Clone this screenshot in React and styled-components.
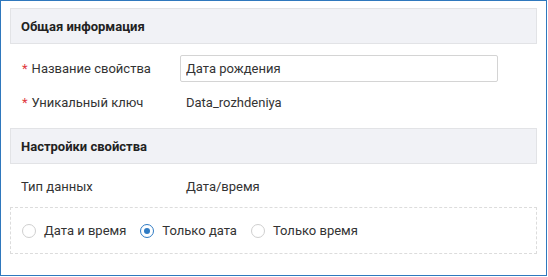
import React, { useState } from 'react';
import styled, { createGlobalStyle } from 'styled-components';

const GlobalStyle = createGlobalStyle`
  body {
    margin: 0;
    background: #fff;
    font-family: Roboto, "Liberation Sans", Arial, sans-serif;
  }
`;

const Frame = styled.div`
  width: 547px;
  height: 276px;
  box-sizing: border-box;
  border: 1px solid #2f78bd;
  padding: 7px 9px 0 9px;
  background: #fff;
`;

const SectionHeader = styled.div`
  height: 36px;
  box-sizing: border-box;
  border: 1px solid #e2e3e6;
  background: #f1f2f6;
  display: flex;
  align-items: center;
  padding-left: 10px;
  font-size: 13px;
  font-weight: 700;
  color: #222;
`;

const Fields = styled.div`
  display: flex;
  flex-direction: column;
  gap: 7px;
  padding: ${({ $top }) => $top}px 0 ${({ $bottom }) => $bottom}px;
`;

const Row = styled.div`
  display: grid;
  grid-template-columns: 158px 318px;
  align-items: center;
  height: 27px;
  padding-left: ${({ $plain }) => ($plain ? 11 : 12)}px;
  font-size: 13px;
  color: #333;
`;

const Label = styled.span`
  white-space: nowrap;
`;

const Star = styled.span`
  color: #e0393e;
  margin-right: 4px;
`;

const Input = styled.input`
  height: 27px;
  box-sizing: border-box;
  width: 318px;
  border: 1px solid #d4d4d4;
  border-radius: 2px;
  padding: 0 5px;
  font: inherit;
  color: #333;
  outline: none;
`;

const Value = styled.span`
  padding-left: 6px;
  margin-left: ${({ $shift }) => $shift || 0}px;
`;

const RadioBox = styled.div`
  height: 47px;
  box-sizing: border-box;
  border: 1px dashed #dcdcdc;
  display: flex;
  align-items: center;
  padding-left: 11px;
  gap: 14px;
`;

const RadioItem = styled.label`
  display: flex;
  align-items: center;
  gap: 8px;
  font-size: 13px;
  color: #333;
  cursor: pointer;
`;

const Circle = styled.span`
  width: 14px;
  height: 14px;
  box-sizing: border-box;
  border-radius: 50%;
  border: 1px solid ${({ $on }) => ($on ? '#2f7bc4' : '#cfcfcf')};
  display: flex;
  align-items: center;
  justify-content: center;
  background: #fff;
  &::after {
    content: '';
    width: 6px;
    height: 6px;
    border-radius: 50%;
    background: #2f7bc4;
    display: ${({ $on }) => ($on ? 'block' : 'none')};
  }
`;

const options = ['Дата и время', 'Только дата', 'Только время'];

const App = () => {
  const [mode, setMode] = useState(1);
  const [name, setName] = useState('Дата рождения');

  return (
    <>
      <GlobalStyle />
      <Frame>
        <SectionHeader>Общая информация</SectionHeader>
        <Fields $top={11} $bottom={12}>
          <Row>
            <Label><Star>*</Star>Название свойства</Label>
            <Input value={name} onChange={(e) => setName(e.target.value)} />
          </Row>
          <Row>
            <Label><Star>*</Star>Уникальный ключ</Label>
            <Value>Data_rozhdeniya</Value>
          </Row>
        </Fields>
        <SectionHeader>Настройки свойства</SectionHeader>
        <Fields $top={9} $bottom={11}>
          <Row $plain>
            <Label>Тип данных</Label>
            <Value $shift={1}>Дата/время</Value>
          </Row>
          <RadioBox>
            {options.map((opt, i) => (
              <RadioItem key={opt} onClick={() => setMode(i)}>
                <Circle $on={mode === i} />
                {opt}
              </RadioItem>
            ))}
          </RadioBox>
        </Fields>
      </Frame>
    </>
  );
};

export default App;
